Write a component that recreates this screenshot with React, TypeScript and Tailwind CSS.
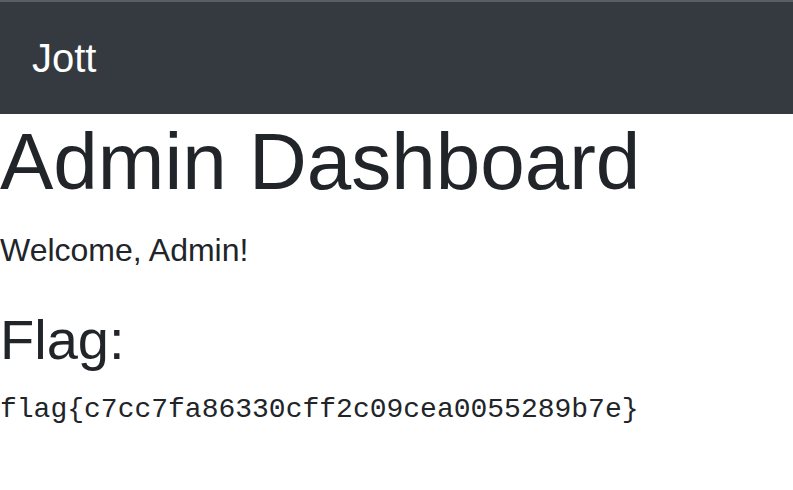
export default function App() {
  return (
    <div className="min-h-screen bg-white font-['Liberation_Sans',Arial,sans-serif] text-[#212529]">
      <nav className="flex h-[114px] items-center border-t-2 border-[#5a5d61] bg-[#343a40] px-8">
        <span className="text-[40px] leading-[60px] text-white">Jott</span>
      </nav>
      <main>
        <h1 className="mb-4 text-[80px] leading-[1.2] font-normal">Admin Dashboard</h1>
        <p className="mb-8 text-[32px] leading-[1.5]">Welcome, Admin!</p>
        <h3 className="mb-4 text-[56px] leading-[1.2] font-normal">Flag:</h3>
        <pre className="font-['Liberation_Mono','Courier_New',monospace] text-[28px] leading-[1.5]">
          flag{"{"}c7cc7fa86330cff2c09cea0055289b7e{"}"}
        </pre>
      </main>
    </div>
  );
}
